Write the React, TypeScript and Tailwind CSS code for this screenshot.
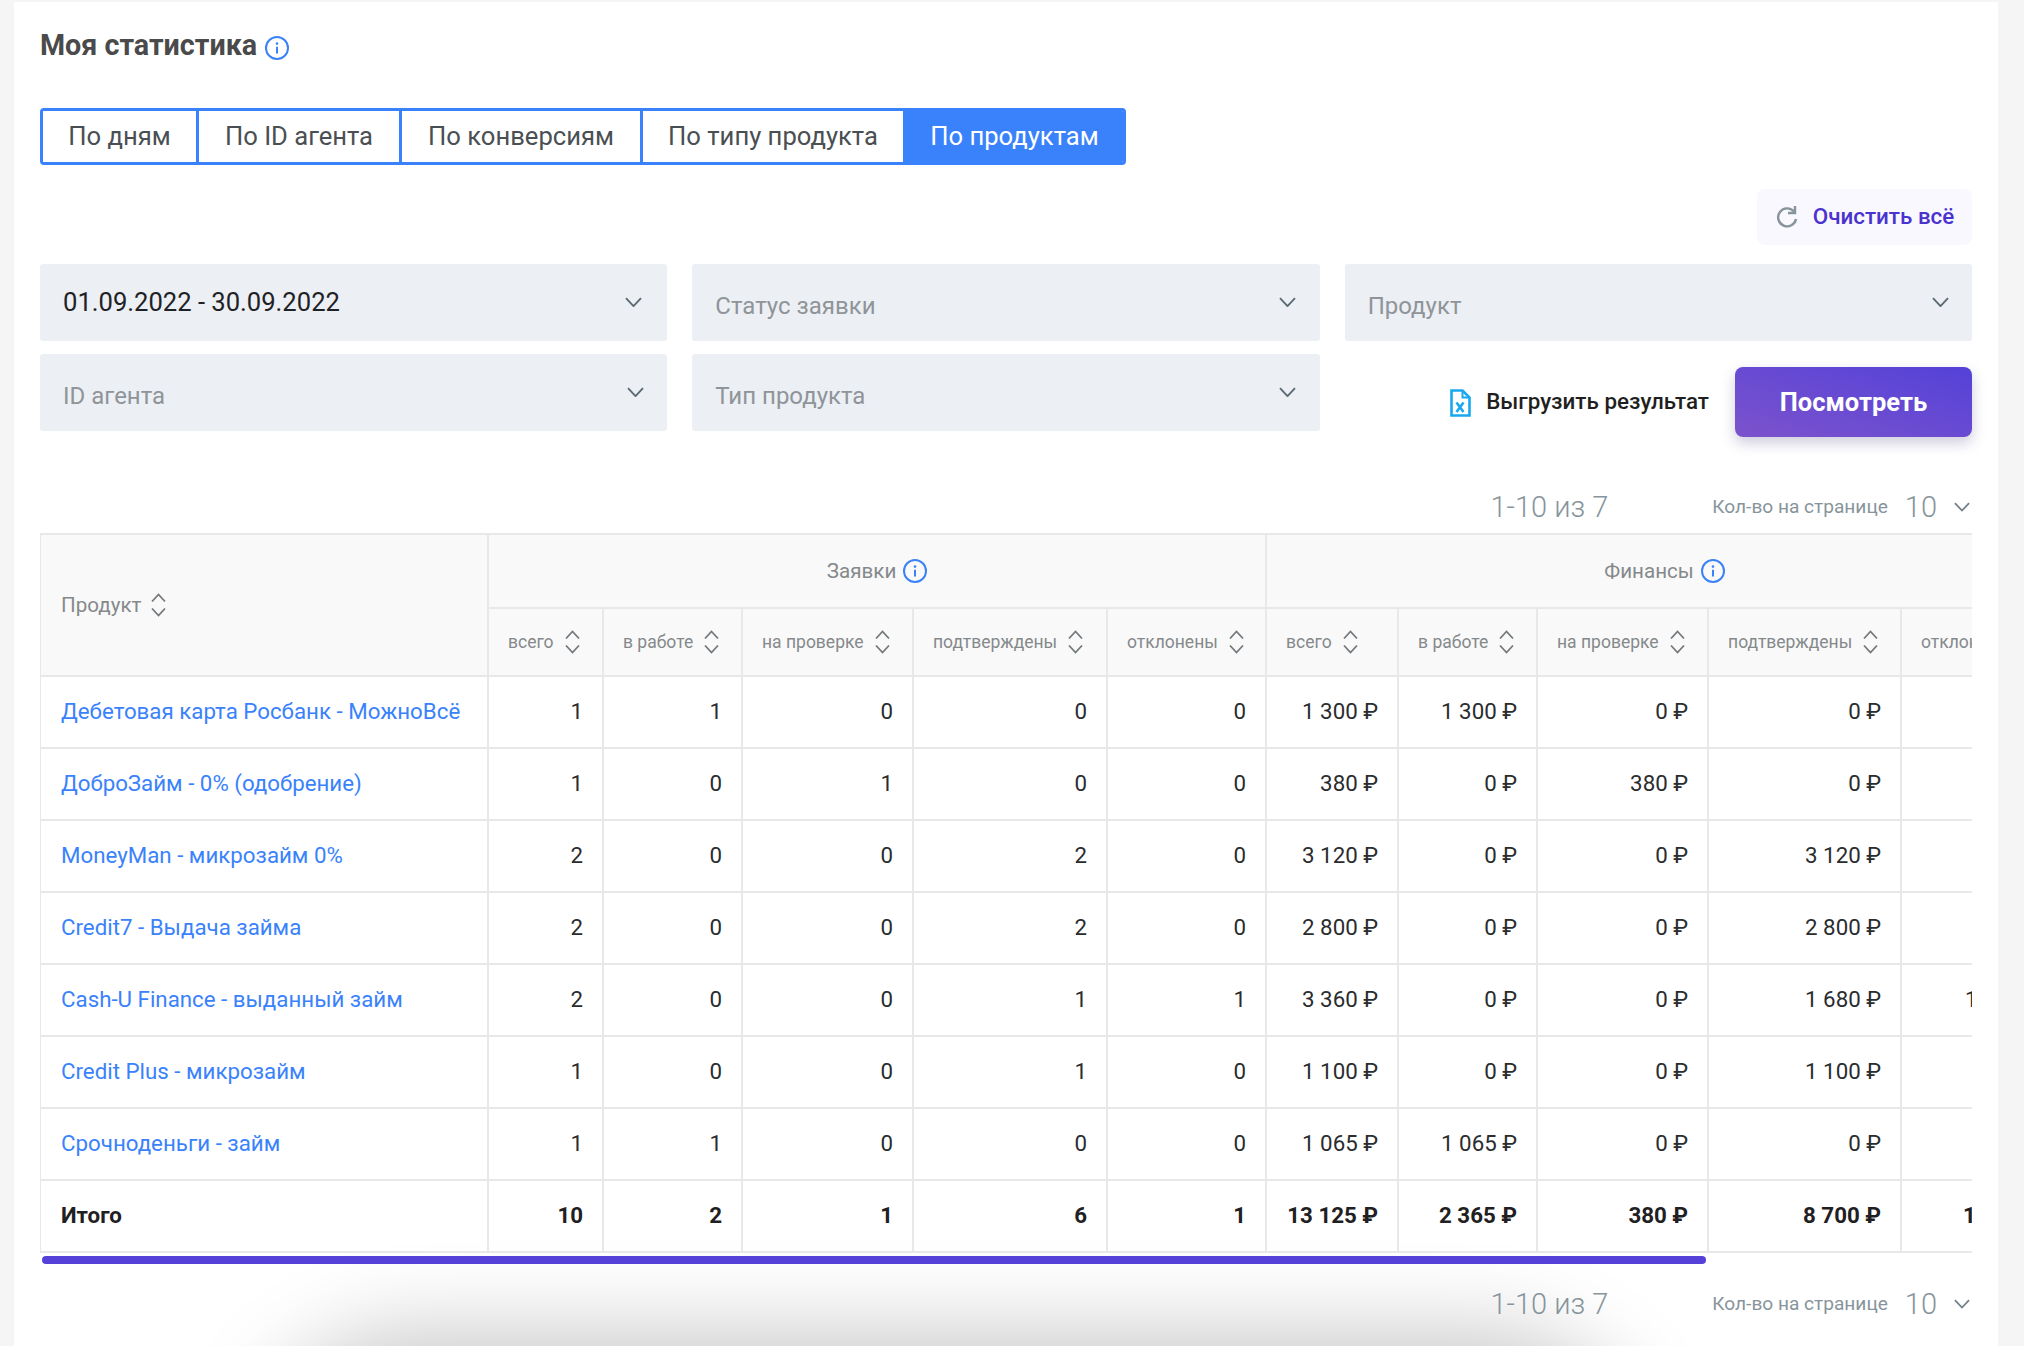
import React from "react";

const Info = ({ s = 24 }: { s?: number }) => (
  <svg width={s} height={s} viewBox="0 0 24 24" fill="none" className="shrink-0">
    <circle cx="12" cy="12" r="11" stroke="#3b82f6" strokeWidth="2" />
    <circle cx="12" cy="7.6" r="1.3" fill="#3b82f6" />
    <path d="M12 10.8v6.6" stroke="#3b82f6" strokeWidth="2" />
  </svg>
);

const Chev = ({ w = 17, c = "#5d6b75" }: { w?: number; c?: string }) => (
  <svg width={w} height={w * 0.6} viewBox="0 0 17 10" fill="none" className="shrink-0">
    <path d="M1 1l7.5 8L16 1" stroke={c} strokeWidth="1.9" />
  </svg>
);

const Sort = () => (
  <svg width="15" height="24" viewBox="0 0 15 24" fill="none" className="shrink-0">
    <path d="M1 8.5l6.5-7 6.5 7M1 15.5l6.5 7 6.5-7" stroke="#73787c" strokeWidth="1.8" />
  </svg>
);

const Filter = ({ label, value, chevRight = 25 }: { label: string; value?: boolean; chevRight?: number }) => (
  <div className="relative h-[77px] rounded-[3px] bg-[#eceff4] pl-[23px] flex items-center">
    <span className={value ? "text-[25.6px] text-[#1f2225]" : "text-[24px] text-[#8f9499] mt-[7px]"}>{label}</span>
    <span className="absolute top-[33px]" style={{ right: chevRight }}>
      <Chev />
    </span>
  </div>
);

const Pager = () => (
  <div className="h-[40px] flex items-center justify-end text-[#87949b]">
    <span className="text-[29px] font-light mt-[1px]">1-10 из 7</span>
    <span className="text-[19.1px] ml-[104px]">Кол-во на странице</span>
    <span className="text-[29px] ml-[17px] font-light mt-[1px]">10</span>
    <span className="ml-[17px] mr-[2px]">
      <Chev w={16} c="#71808a" />
    </span>
  </div>
);

const cols = [449, 115, 139, 171, 194, 159, 132, 139, 171, 193, 160];
const sub = ["всего", "в работе", "на проверке", "подтверждены", "отклонены"];

const rows: [string, (number | string)[]][] = [
  ["Дебетовая карта Росбанк - МожноВсё", [1, 1, 0, 0, 0, "1 300 ₽", "1 300 ₽", "0 ₽", "0 ₽", "0 ₽"]],
  ["ДоброЗайм - 0% (одобрение)", [1, 0, 1, 0, 0, "380 ₽", "0 ₽", "380 ₽", "0 ₽", "0 ₽"]],
  ["MoneyMan - микрозайм 0%", [2, 0, 0, 2, 0, "3 120 ₽", "0 ₽", "0 ₽", "3 120 ₽", "0 ₽"]],
  ["Credit7 - Выдача займа", [2, 0, 0, 2, 0, "2 800 ₽", "0 ₽", "0 ₽", "2 800 ₽", "0 ₽"]],
  ["Cash-U Finance - выданный займ", [2, 0, 0, 1, 1, "3 360 ₽", "0 ₽", "0 ₽", "1 680 ₽", "1 680 ₽"]],
  ["Credit Plus - микрозайм", [1, 0, 0, 1, 0, "1 100 ₽", "0 ₽", "0 ₽", "1 100 ₽", "0 ₽"]],
  ["Срочноденьги - займ", [1, 1, 0, 0, 0, "1 065 ₽", "1 065 ₽", "0 ₽", "0 ₽", "0 ₽"]],
];
const total: (number | string)[] = [10, 2, 1, 6, 1, "13 125 ₽", "2 365 ₽", "380 ₽", "8 700 ₽", "1 680 ₽"];

const tabs = [
  ["По дням", "w-[156px]"],
  ["По ID агента", "w-[203px]"],
  ["По конверсиям", "w-[241px]"],
  ["По типу продукта", "w-[263px]"],
];

export default function App() {
  return (
    <div className="h-[1346px] overflow-hidden bg-[#f5f5f5] pt-[2px] pl-[14px] font-['Roboto',sans-serif]">
      <div className="relative isolate w-[1984px] h-[1344px] overflow-hidden bg-white px-[26px] pt-[23px]">
        <div className="absolute -z-10 left-[300px] top-[1400px] w-[1270px] h-[200px] rounded-full shadow-[0_0_90px_70px_rgba(0,0,0,0.22)]" />

        <div className="h-[40px] flex items-center gap-[8px]">
          <h1 className="text-[28.7px] font-bold text-[#4a4a4a] mt-[1px]">Моя статистика</h1>
          <span className="mt-[6px]">
            <Info />
          </span>
        </div>

        <div className="mt-[43px] flex h-[57px] w-[1086px] rounded-[4px] overflow-hidden border-[3px] border-[#3a82fb]">
          {tabs.map(([t, w]) => (
            <div key={t} className={`${w} shrink-0 flex items-center justify-center bg-white text-[25.6px] text-[#4a4f53] border-r-[3px] border-[#3a82fb]`}>
              {t}
            </div>
          ))}
          <div className="flex-1 flex items-center justify-center bg-[#3a82fb] text-[25.6px] text-white">По продуктам</div>
        </div>

        <div className="mt-[24px] flex justify-end">
          <button className="h-[56px] w-[215px] rounded-[8px] bg-[#f8f8fe] flex items-center justify-center gap-[14px] text-[22.4px] font-medium text-[#4a32cf]">
            <svg width="24" height="26" viewBox="0 0 24 26" fill="none" className="shrink-0 -mt-[1px]">
              <path d="M19 7.5A9 9 0 1 0 21 15" stroke="#87949b" strokeWidth="2.4" />
              <path d="M20 2v7h-7" stroke="#87949b" strokeWidth="2.4" />
            </svg>
            <span>Очистить всё</span>
          </button>
        </div>

        <div className="mt-[19px] grid grid-cols-3 gap-x-[25px] gap-y-[13px]">
          <Filter label="01.09.2022 - 30.09.2022" value />
          <Filter label="Статус заявки" chevRight={24} />
          <Filter label="Продукт" chevRight={23} />
          <Filter label="ID агента" chevRight={23} />
          <Filter label="Тип продукта" chevRight={24} />
          <div className="h-[77px] flex justify-end items-start pt-[13px]">
            <div className="h-[70px] flex items-center gap-[15px] mr-[26px] text-[22.4px] font-medium text-[#1f1f1f]">
              <svg width="21" height="28" viewBox="0 0 21 28" fill="none" className="shrink-0 mt-[2px]">
                <path d="M1.5 1.5h11l7 7v18h-18z" stroke="#18a8f0" strokeWidth="2.6" />
                <path d="M12.5 1.5v7h7" stroke="#18a8f0" strokeWidth="2" />
                <path d="M6.5 13.5l7 9.5M13.5 13.5l-7 9.5" stroke="#18a8f0" strokeWidth="2.6" />
              </svg>
              <span className="-mt-[1px]">Выгрузить результат</span>
            </div>
            <button className="h-[70px] w-[237px] shrink-0 rounded-[8px] bg-gradient-to-tr from-[#7c52cc] to-[#5441d8] text-white text-[25.5px] font-bold shadow-[0_6px_14px_rgba(60,50,120,0.25)]">
              Посмотреть
            </button>
          </div>
        </div>

        <div className="mt-[56px]">
          <Pager />
        </div>

        <div className="mt-[6px] overflow-hidden">
          <table className="table-fixed border-separate border-spacing-0 w-[2022px] text-[22.3px]">
            <colgroup>
              {cols.map((w, i) => (
                <col key={i} style={{ width: w }} />
              ))}
            </colgroup>
            <thead className="bg-[#f9f9f9] text-[#85898b] font-normal">
              <tr className="h-[76px]">
                <th rowSpan={2} className="border-t-2 border-l border-b-2 border-r-2 border-[#e8e8e8] pl-[20px] text-left font-normal text-[20.6px]">
                  <div className="flex items-center gap-[10px]">
                    Продукт
                    <Sort />
                  </div>
                </th>
                <th colSpan={5} className="border-t-2 border-b-2 border-r-2 border-[#e8e8e8] font-normal text-[20.6px]">
                  <div className="flex items-center justify-center gap-[7px]">
                    Заявки
                    <Info />
                  </div>
                </th>
                <th colSpan={5} className="border-t-2 border-b-2 border-[#e8e8e8] font-normal text-[20.6px]">
                  <div className="flex items-center justify-center gap-[7px]">
                    Финансы
                    <Info />
                  </div>
                </th>
              </tr>
              <tr className="h-[68px]">
                {[...sub, ...sub].map((t, i) => (
                  <th key={i} className="border-b-2 border-r-2 border-[#e8e8e8] pl-[19px] text-left font-normal text-[17.5px] whitespace-nowrap overflow-hidden">
                    <div className="flex items-center gap-[11px]">
                      {t}
                      <Sort />
                    </div>
                  </th>
                ))}
              </tr>
            </thead>
            <tbody className="text-[#2a2c2e]">
              {rows.map(([name, vals]) => (
                <tr key={name} className="h-[72px]">
                  <td className="border-l border-b-2 border-r-2 border-[#e8e8e8] pl-[20px] pb-[1px] text-[#3a82fb] whitespace-nowrap">{name}</td>
                  {vals.map((v, i) => (
                    <td key={i} className="border-b-2 border-r-2 border-[#e8e8e8] pr-[19px] pb-[1px] text-right whitespace-nowrap">
                      {v}
                    </td>
                  ))}
                </tr>
              ))}
              <tr className="h-[72px] font-bold text-[#1f2022]">
                <td className="border-l border-b-2 border-r-2 border-[#e8e8e8] pl-[20px] pb-[1px]">Итого</td>
                {total.map((v, i) => (
                  <td key={i} className="border-b-2 border-r-2 border-[#e8e8e8] pr-[19px] pb-[1px] text-right whitespace-nowrap">
                    {v}
                  </td>
                ))}
              </tr>
            </tbody>
          </table>
        </div>

        <div className="mt-[3px] ml-[2px] h-[8px] w-[1664px] rounded-full bg-[#5541d7]" />

        <div className="mt-[20px]">
          <Pager />
        </div>
      </div>
    </div>
  );
}
